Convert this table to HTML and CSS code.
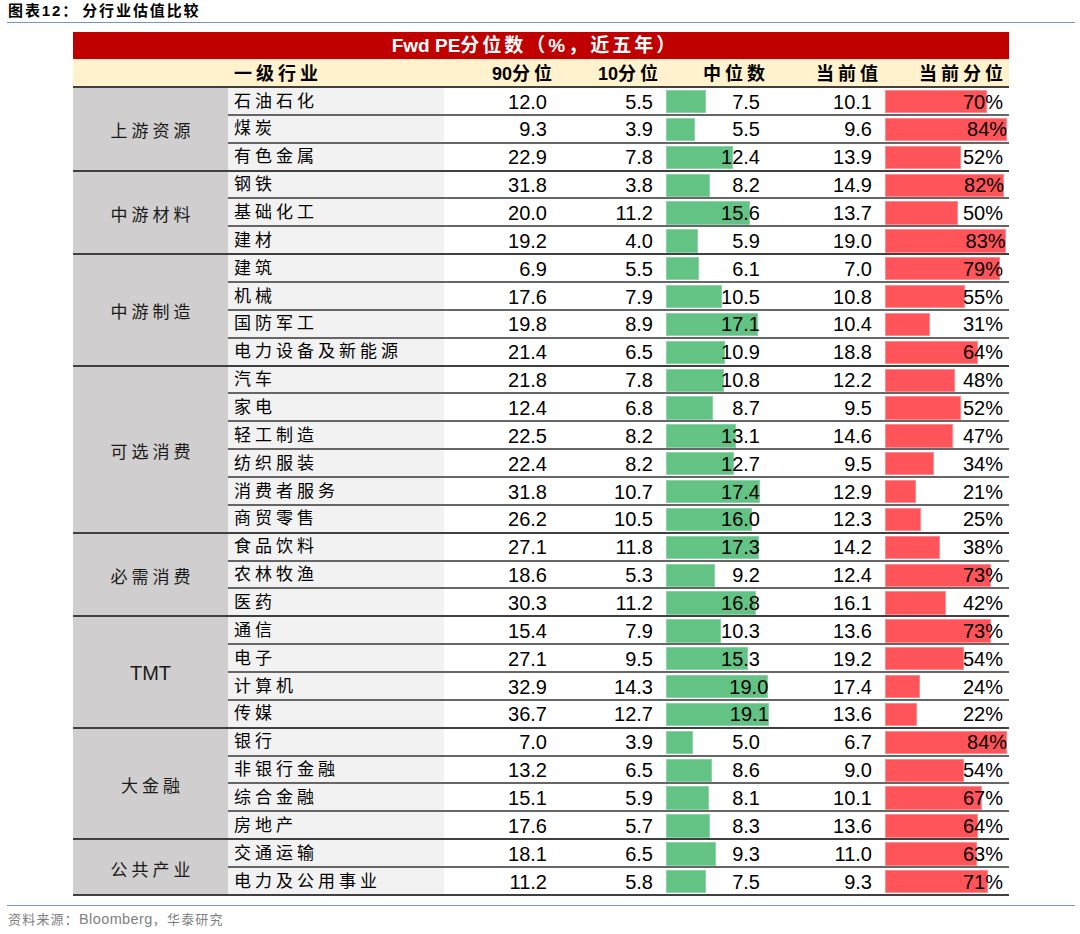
FILE: index.html
```html
<!DOCTYPE html>
<html lang="zh-CN">
<head>
<meta charset="utf-8">
<title>分行业估值比较</title>
<link rel="stylesheet" href="styles.css">
</head>
<body>
<div class="sheet">
  <h1 class="title"><span class="title-no">图表12：</span><span class="title-text">分行业估值比较</span></h1>

  <div class="table">
    <div class="banner">Fwd PE<span class="cjk-wide">分位数（%，近五年）</span></div>
    <div class="head">
      <div class="h-ind">一级行业</div>
      <div class="h-num"><span class="digits">90</span>分位</div>
      <div class="h-num"><span class="digits">10</span>分位</div>
      <div class="h-num">中位数</div>
      <div class="h-num">当前值</div>
      <div class="h-num">当前分位</div>
    </div>

    <div class="group">
      <div class="glabel">上游资源</div>
      <div class="rows">
        <div class="row"><div class="ind">石油石化</div><div class="num">12.0</div><div class="num">5.5</div><div class="bar-cell med"><span class="bar green" style="width:40.5px"></span><span class="val">7.5</span></div><div class="num">10.1</div><div class="bar-cell pct"><span class="bar red" style="width:101.7px"></span><span class="val">70%</span></div></div>
        <div class="row"><div class="ind">煤炭</div><div class="num">9.3</div><div class="num">3.9</div><div class="bar-cell med"><span class="bar green" style="width:29.7px"></span><span class="val">5.5</span></div><div class="num">9.6</div><div class="bar-cell pct"><span class="bar red" style="width:122.1px"></span><span class="val">84%</span></div></div>
        <div class="row"><div class="ind">有色金属</div><div class="num">22.9</div><div class="num">7.8</div><div class="bar-cell med"><span class="bar green" style="width:67px"></span><span class="val">12.4</span></div><div class="num">13.9</div><div class="bar-cell pct"><span class="bar red" style="width:75.6px"></span><span class="val">52%</span></div></div>
      </div>
    </div>

    <div class="group">
      <div class="glabel">中游材料</div>
      <div class="rows">
        <div class="row"><div class="ind">钢铁</div><div class="num">31.8</div><div class="num">3.8</div><div class="bar-cell med"><span class="bar green" style="width:44.3px"></span><span class="val">8.2</span></div><div class="num">14.9</div><div class="bar-cell pct"><span class="bar red" style="width:119.1px"></span><span class="val">82%</span></div></div>
        <div class="row"><div class="ind">基础化工</div><div class="num">20.0</div><div class="num">11.2</div><div class="bar-cell med"><span class="bar green" style="width:84.2px"></span><span class="val">15.6</span></div><div class="num">13.7</div><div class="bar-cell pct"><span class="bar red" style="width:72.7px"></span><span class="val">50%</span></div></div>
        <div class="row"><div class="ind">建材</div><div class="num">19.2</div><div class="num">4.0</div><div class="bar-cell med"><span class="bar green" style="width:31.9px"></span><span class="val">5.9</span></div><div class="num">19.0</div><div class="bar-cell pct"><span class="bar red" style="width:120.6px"></span><span class="val">83%</span></div></div>
      </div>
    </div>

    <div class="group">
      <div class="glabel">中游制造</div>
      <div class="rows">
        <div class="row"><div class="ind">建筑</div><div class="num">6.9</div><div class="num">5.5</div><div class="bar-cell med"><span class="bar green" style="width:32.9px"></span><span class="val">6.1</span></div><div class="num">7.0</div><div class="bar-cell pct"><span class="bar red" style="width:114.8px"></span><span class="val">79%</span></div></div>
        <div class="row"><div class="ind">机械</div><div class="num">17.6</div><div class="num">7.9</div><div class="bar-cell med"><span class="bar green" style="width:56.7px"></span><span class="val">10.5</span></div><div class="num">10.8</div><div class="bar-cell pct"><span class="bar red" style="width:79.9px"></span><span class="val">55%</span></div></div>
        <div class="row"><div class="ind">国防军工</div><div class="num">19.8</div><div class="num">8.9</div><div class="bar-cell med"><span class="bar green" style="width:92.3px"></span><span class="val">17.1</span></div><div class="num">10.4</div><div class="bar-cell pct"><span class="bar red" style="width:45px"></span><span class="val">31%</span></div></div>
        <div class="row"><div class="ind">电力设备及新能源</div><div class="num">21.4</div><div class="num">6.5</div><div class="bar-cell med"><span class="bar green" style="width:58.9px"></span><span class="val">10.9</span></div><div class="num">18.8</div><div class="bar-cell pct"><span class="bar red" style="width:93px"></span><span class="val">64%</span></div></div>
      </div>
    </div>

    <div class="group">
      <div class="glabel">可选消费</div>
      <div class="rows">
        <div class="row"><div class="ind">汽车</div><div class="num">21.8</div><div class="num">7.8</div><div class="bar-cell med"><span class="bar green" style="width:58.3px"></span><span class="val">10.8</span></div><div class="num">12.2</div><div class="bar-cell pct"><span class="bar red" style="width:69.7px"></span><span class="val">48%</span></div></div>
        <div class="row"><div class="ind">家电</div><div class="num">12.4</div><div class="num">6.8</div><div class="bar-cell med"><span class="bar green" style="width:47px"></span><span class="val">8.7</span></div><div class="num">9.5</div><div class="bar-cell pct"><span class="bar red" style="width:75.6px"></span><span class="val">52%</span></div></div>
        <div class="row"><div class="ind">轻工制造</div><div class="num">22.5</div><div class="num">8.2</div><div class="bar-cell med"><span class="bar green" style="width:70.7px"></span><span class="val">13.1</span></div><div class="num">14.6</div><div class="bar-cell pct"><span class="bar red" style="width:68.3px"></span><span class="val">47%</span></div></div>
        <div class="row"><div class="ind">纺织服装</div><div class="num">22.4</div><div class="num">8.2</div><div class="bar-cell med"><span class="bar green" style="width:68.6px"></span><span class="val">12.7</span></div><div class="num">9.5</div><div class="bar-cell pct"><span class="bar red" style="width:49.4px"></span><span class="val">34%</span></div></div>
        <div class="row"><div class="ind">消费者服务</div><div class="num">31.8</div><div class="num">10.7</div><div class="bar-cell med"><span class="bar green" style="width:94px"></span><span class="val">17.4</span></div><div class="num">12.9</div><div class="bar-cell pct"><span class="bar red" style="width:30.5px"></span><span class="val">21%</span></div></div>
        <div class="row"><div class="ind">商贸零售</div><div class="num">26.2</div><div class="num">10.5</div><div class="bar-cell med"><span class="bar green" style="width:86.4px"></span><span class="val">16.0</span></div><div class="num">12.3</div><div class="bar-cell pct"><span class="bar red" style="width:36.3px"></span><span class="val">25%</span></div></div>
      </div>
    </div>

    <div class="group">
      <div class="glabel">必需消费</div>
      <div class="rows">
        <div class="row"><div class="ind">食品饮料</div><div class="num">27.1</div><div class="num">11.8</div><div class="bar-cell med"><span class="bar green" style="width:93.4px"></span><span class="val">17.3</span></div><div class="num">14.2</div><div class="bar-cell pct"><span class="bar red" style="width:55.2px"></span><span class="val">38%</span></div></div>
        <div class="row"><div class="ind">农林牧渔</div><div class="num">18.6</div><div class="num">5.3</div><div class="bar-cell med"><span class="bar green" style="width:49.7px"></span><span class="val">9.2</span></div><div class="num">12.4</div><div class="bar-cell pct"><span class="bar red" style="width:106.1px"></span><span class="val">73%</span></div></div>
        <div class="row"><div class="ind">医药</div><div class="num">30.3</div><div class="num">11.2</div><div class="bar-cell med"><span class="bar green" style="width:90.7px"></span><span class="val">16.8</span></div><div class="num">16.1</div><div class="bar-cell pct"><span class="bar red" style="width:61px"></span><span class="val">42%</span></div></div>
      </div>
    </div>

    <div class="group">
      <div class="glabel latin">TMT</div>
      <div class="rows">
        <div class="row"><div class="ind">通信</div><div class="num">15.4</div><div class="num">7.9</div><div class="bar-cell med"><span class="bar green" style="width:55.6px"></span><span class="val">10.3</span></div><div class="num">13.6</div><div class="bar-cell pct"><span class="bar red" style="width:106.1px"></span><span class="val">73%</span></div></div>
        <div class="row"><div class="ind">电子</div><div class="num">27.1</div><div class="num">9.5</div><div class="bar-cell med"><span class="bar green" style="width:82.6px"></span><span class="val">15.3</span></div><div class="num">19.2</div><div class="bar-cell pct"><span class="bar red" style="width:78.5px"></span><span class="val">54%</span></div></div>
        <div class="row"><div class="ind">计算机</div><div class="num">32.9</div><div class="num">14.3</div><div class="bar-cell med"><span class="bar green" style="width:102.6px"></span><span class="val">19.0</span></div><div class="num">17.4</div><div class="bar-cell pct"><span class="bar red" style="width:34.9px"></span><span class="val">24%</span></div></div>
        <div class="row"><div class="ind">传媒</div><div class="num">36.7</div><div class="num">12.7</div><div class="bar-cell med"><span class="bar green" style="width:103.1px"></span><span class="val">19.1</span></div><div class="num">13.6</div><div class="bar-cell pct"><span class="bar red" style="width:32px"></span><span class="val">22%</span></div></div>
      </div>
    </div>

    <div class="group">
      <div class="glabel">大金融</div>
      <div class="rows">
        <div class="row"><div class="ind">银行</div><div class="num">7.0</div><div class="num">3.9</div><div class="bar-cell med"><span class="bar green" style="width:27px"></span><span class="val">5.0</span></div><div class="num">6.7</div><div class="bar-cell pct"><span class="bar red" style="width:122.1px"></span><span class="val">84%</span></div></div>
        <div class="row"><div class="ind">非银行金融</div><div class="num">13.2</div><div class="num">6.5</div><div class="bar-cell med"><span class="bar green" style="width:46.4px"></span><span class="val">8.6</span></div><div class="num">9.0</div><div class="bar-cell pct"><span class="bar red" style="width:78.5px"></span><span class="val">54%</span></div></div>
        <div class="row"><div class="ind">综合金融</div><div class="num">15.1</div><div class="num">5.9</div><div class="bar-cell med"><span class="bar green" style="width:43.7px"></span><span class="val">8.1</span></div><div class="num">10.1</div><div class="bar-cell pct"><span class="bar red" style="width:97.4px"></span><span class="val">67%</span></div></div>
        <div class="row"><div class="ind">房地产</div><div class="num">17.6</div><div class="num">5.7</div><div class="bar-cell med"><span class="bar green" style="width:44.8px"></span><span class="val">8.3</span></div><div class="num">13.6</div><div class="bar-cell pct"><span class="bar red" style="width:93px"></span><span class="val">64%</span></div></div>
      </div>
    </div>

    <div class="group">
      <div class="glabel">公共产业</div>
      <div class="rows">
        <div class="row"><div class="ind">交通运输</div><div class="num">18.1</div><div class="num">6.5</div><div class="bar-cell med"><span class="bar green" style="width:50.2px"></span><span class="val">9.3</span></div><div class="num">11.0</div><div class="bar-cell pct"><span class="bar red" style="width:91.5px"></span><span class="val">63%</span></div></div>
        <div class="row"><div class="ind">电力及公用事业</div><div class="num">11.2</div><div class="num">5.8</div><div class="bar-cell med"><span class="bar green" style="width:40.5px"></span><span class="val">7.5</span></div><div class="num">9.3</div><div class="bar-cell pct"><span class="bar red" style="width:103.2px"></span><span class="val">71%</span></div></div>
      </div>
    </div>
  </div>

  <p class="source"><span class="src-cjk">资料来源：</span><span class="src-latin">Bloomberg</span><span class="src-cjk">，华泰研究</span></p>
</div>
</body>
</html>
```

FILE: styles.css
```css
* { box-sizing: border-box; }

html, body {
  margin: 0;
  padding: 0;
  background: #ffffff;
}

body {
  font-family: "Liberation Sans", "Noto Sans CJK SC", sans-serif;
  color: #000000;
}

.sheet {
  width: 1080px;
  height: 934px;
}

/* ---------- title ---------- */
.title {
  margin: 0 5px 0 7px;
  height: 23px;
  padding: 2px 0 0 1px;
  border-bottom: 1.5px solid #6f96c4;
  font-size: 15px;
  font-weight: bold;
  line-height: 18px;
  letter-spacing: 1.9px;
  white-space: nowrap;
}

.title-no { margin-right: 3px; }

/* ---------- table ---------- */
.table {
  width: 936px;
  margin: 9px 0 0 73px;
}

.banner {
  height: 27px;
  background: #c00000;
  color: #ffffff;
  font-weight: bold;
  font-size: 19px;
  line-height: 27px;
  text-align: center;
  padding-right: 12px;
}

.cjk-wide { letter-spacing: 3px; }

.head {
  display: grid;
  grid-template-columns: 155px 216px 112px 106px 107px 113px 125px;
  height: 29px;
  padding-top: 3px;
  background: #fff2cc;
  border-bottom: 2px solid #404040;
  font-weight: bold;
  font-size: 18px;
  line-height: 24px;
  letter-spacing: 4px;
}

.digits { letter-spacing: 0; }

.h-ind {
  grid-column: 2;
  padding-left: 6px;
}

.h-num {
  text-align: right;
}

.group {
  display: flex;
  border-bottom: 2px solid #404040;
}

.glabel {
  width: 155px;
  flex: none;
  display: flex;
  align-items: center;
  justify-content: center;
  padding: 2px 0 0 4px;
  background: #d0cece;
  font-size: 17px;
  letter-spacing: 4px;
  color: #1a1a1a;
}

.glabel.latin {
  font-size: 20px;
  letter-spacing: 0;
  padding-left: 0;
}

.rows {
  flex: 1;
  display: flex;
  flex-direction: column;
}

.row {
  display: grid;
  grid-template-columns: 216px 108px 106px 107px 112px 132px;
  height: 27.86px;
  border-bottom: 2px solid #666666;
}

.row:last-child {
  height: 25.86px;
  border-bottom: 0;
}

.ind {
  background: #f2f2f2;
  padding: 1.5px 0 0 6px;
  font-size: 17px;
  letter-spacing: 4px;
  line-height: 24.36px;
  white-space: nowrap;
}

.num {
  text-align: right;
  padding: 1.5px 5px 0 0;
  font-size: 20px;
  line-height: 24.36px;
}

.bar-cell {
  display: grid;
  font-size: 20px;
  line-height: 24.36px;
}

.bar-cell.med { padding: 0 5px 0 7.7px; }
.bar-cell.pct { padding: 0 6px 0 8px; }

.bar {
  grid-area: 1 / 1;
  justify-self: start;
  align-self: start;
  margin-top: 2px;
  height: 23.3px;
}

.bar.green {
  background: #63c384;
  border: 1px solid #8ed3a5;
}

.bar.red {
  background: #ff555a;
  border: 1px solid #ff8a8d;
}

.val {
  grid-area: 1 / 1;
  justify-self: end;
  margin-top: 1.5px;
}

/* ---------- source ---------- */
.source {
  margin: 9px 5px 0 7px;
  padding: 3px 0 0 1px;
  border-top: 1.5px solid #6f96c4;
  color: #7f7f7f;
  line-height: 20px;
  white-space: nowrap;
}

.src-cjk {
  font-size: 13px;
  letter-spacing: 1.2px;
}

.src-latin {
  font-size: 14.5px;
  letter-spacing: 0.4px;
}
```
